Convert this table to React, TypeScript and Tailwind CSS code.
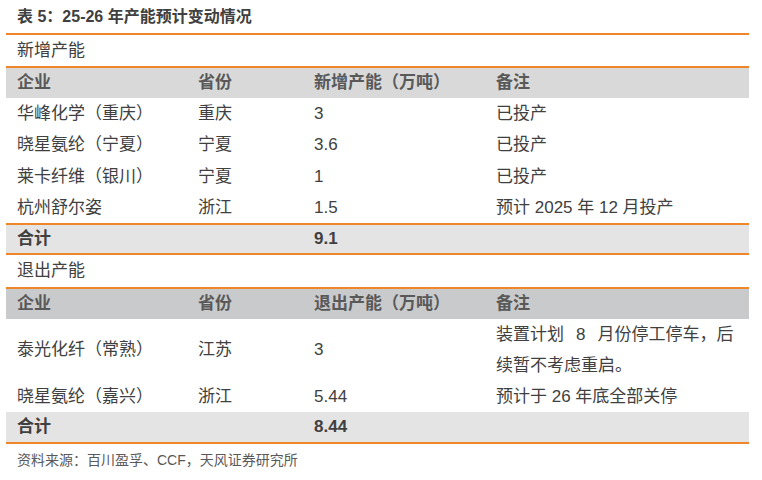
import React from "react";

const cols = "grid grid-cols-[181px_116px_182px_1fr]";
const cell = "px-[11px] flex items-center whitespace-nowrap";

type Row = { name: string; prov: string; cap: string; note: React.ReactNode; h: string };

const added: Row[] = [
  { name: "华峰化学（重庆）", prov: "重庆", cap: "3", note: "已投产", h: "h-[31px]" },
  { name: "晓星氨纶（宁夏）", prov: "宁夏", cap: "3.6", note: "已投产", h: "h-[32px]" },
  { name: "莱卡纤维（银川）", prov: "宁夏", cap: "1", note: "已投产", h: "h-[31px]" },
  { name: "杭州舒尔姿", prov: "浙江", cap: "1.5", note: "预计 2025 年 12 月投产", h: "h-[31px]" },
];

const removed: Row[] = [
  {
    name: "泰光化纤（常熟）",
    prov: "江苏",
    cap: "3",
    note: (
      <span className="leading-[31px]">
        装置计划<span className="mx-[12px]">8</span>月份停工停车，后
        <br />
        续暂不考虑重启。
      </span>
    ),
    h: "h-[62px]",
  },
  { name: "晓星氨纶（嘉兴）", prov: "浙江", cap: "5.44", note: "预计于 26 年底全部关停", h: "h-[31px]" },
];

function Header({ cap, bg }: { cap: string; bg: string }) {
  return (
    <div className={`${cols} ${bg} border-t-2 border-[#f0862a] h-[32px] font-bold text-[#595959]`}>
      <div className={cell}>企业</div>
      <div className={cell}>省份</div>
      <div className={cell}>{cap}</div>
      <div className={cell}>备注</div>
    </div>
  );
}

function Rows({ rows }: { rows: Row[] }) {
  return (
    <>
      {rows.map((r) => (
        <div key={r.name} className={`${cols} ${r.h} text-[#404040]`}>
          <div className={cell}>{r.name}</div>
          <div className={cell}>{r.prov}</div>
          <div className={cell}>{r.cap}</div>
          <div className={cell}>{r.note}</div>
        </div>
      ))}
    </>
  );
}

function Total({ value, top }: { value: string; top: boolean }) {
  return (
    <div
      className={`${cols} bg-[#e4e4e4] h-[32px] border-b-2 border-[#f0862a] font-bold text-[#404040] ${
        top ? "border-t-2" : ""
      }`}
    >
      <div className={cell}>合计</div>
      <div className={cell}></div>
      <div className={cell}>{value}</div>
      <div className={cell}></div>
    </div>
  );
}

export default function App() {
  return (
    <div
      className="w-[762px] h-[480px] bg-white overflow-hidden"
      style={{ fontFamily: '"Liberation Sans", "Noto Sans CJK SC", sans-serif' }}
    >
      <div className="h-[33px] flex items-center px-[17px] text-[16px] font-bold text-[#404040]">
        表 5：25-26 年产能预计变动情况
      </div>
      <div className="mx-[6px] w-[743px] text-[17px]">
        <div className="h-[33px] border-t-2 border-[#f0862a] flex items-center px-[11px] text-[#404040]">
          新增产能
        </div>
        <Header cap="新增产能（万吨）" bg="bg-[#d9d9d9]" />
        <Rows rows={added} />
        <Total value="9.1" top />
        <div className="h-[32px] flex items-center px-[11px] text-[#404040]">退出产能</div>
        <Header cap="退出产能（万吨）" bg="bg-[#c9cacc]" />
        <Rows rows={removed} />
        <Total value="8.44" top={false} />
      </div>
      <div className="px-[17px] pt-[6px] text-[14px] text-[#595959]">
        资料来源：百川盈孚、CCF，天风证券研究所
      </div>
    </div>
  );
}
